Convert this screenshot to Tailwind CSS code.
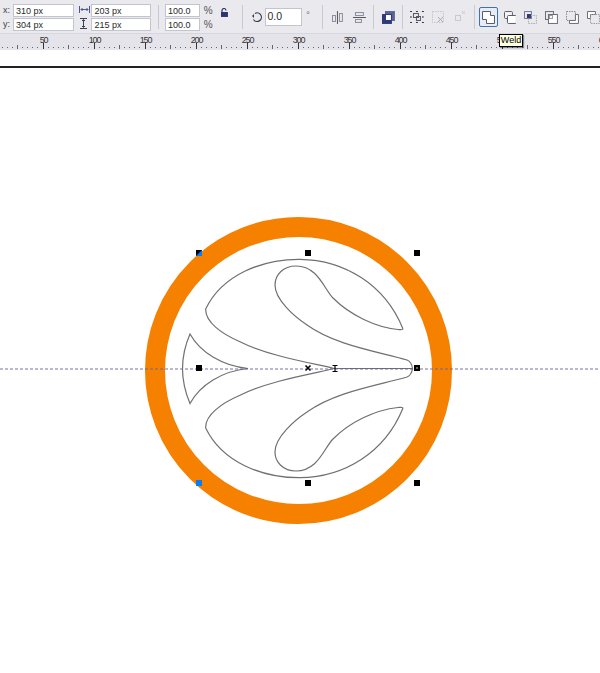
<!DOCTYPE html>
<html lang="en">
<head>
    <meta charset="UTF-8">
    <title>Weld</title>
    <script src="https://cdn.jsdelivr.net/npm/@tailwindcss/browser@4"></script>
</head>
<body class="bg-white w-[600px] h-[673px] overflow-hidden relative font-['Liberation_Sans',sans-serif]">

    <!-- property bar -->
    <div class="h-[33px] bg-[#e9e9ee] flex items-start text-[9px] leading-[13px] text-[#2a2a2a]">
        <div class="w-[13px] pl-[3px] pt-[4px] text-[#444]">
            <div class="h-[14px]">x:</div>
            <div class="h-[14px]">y:</div>
        </div>
        <div class="w-[61px] pt-[4px] flex flex-col gap-px">
            <div class="h-[13px] bg-white border border-[#c2c5d0] pl-[2px]">310 px</div>
            <div class="h-[13px] bg-white border border-[#c2c5d0] pl-[2px]">304 px</div>
        </div>
        <div class="w-[18px] pt-[6px] pl-[5px] flex flex-col gap-[5px]">
            <svg width="11" height="7" viewBox="0 0 11 7" fill="none" stroke="#4a5690"><path d="M.5 0v7M10.500 0v7M2 3.500h7M3.500 2 2 3.500l1.500 1.500M7.500 2 9 3.500 7.500 5"/></svg>
            <svg width="9" height="11" viewBox="0 0 9 11" fill="none" stroke="#3a3f5a"><path d="M1 .5h7M1 10.500h7M4.500 2v7M3 3l1.500-1.500L6 3M3 8l1.500 1.500L6 8"/></svg>
        </div>
        <div class="w-[60px] pt-[4px] flex flex-col gap-px">
            <div class="h-[13px] bg-white border border-[#c2c5d0] pl-[2px]">203 px</div>
            <div class="h-[13px] bg-white border border-[#c2c5d0] pl-[2px]">215 px</div>
        </div>
        <div class="w-px h-[24px] mt-[5px] ml-[7px] bg-[#c9c9d2]"></div>
        <div class="w-[35px] ml-[6px] pt-[4px] flex flex-col gap-px">
            <div class="h-[13px] bg-white border border-[#c2c5d0] pl-[2px]">100.0</div>
            <div class="h-[13px] bg-white border border-[#c2c5d0] pl-[2px]">100.0</div>
        </div>
        <div class="w-[16px] pl-[4px] pt-[4px] text-[#555] text-[10px]">
            <div class="h-[14px]">%</div>
            <div class="h-[14px]">%</div>
        </div>
        <svg class="mt-[8px] ml-[4px]" width="9" height="9" viewBox="0 0 9 9"><path d="M2 4V2.500a2 2 0 0 1 4 0" fill="none" stroke="#2b3570" stroke-width="1.200"/><rect x="1" y="4" width="7" height="5" fill="#2b3570"/></svg>
        <div class="w-px h-[24px] mt-[5px] ml-[13px] bg-[#c9c9d2]"></div>
        <svg class="mt-[11px] ml-[8px]" width="12" height="12" viewBox="0 0 12 12" fill="none" stroke="#3a3d4a" stroke-width="1.200"><path d="M4 2.500a4.300 4.300 0 1 1-1.500 6"/><path d="M3 3 1 5l2 2" fill="#3a3d4a" stroke="none"/></svg>
        <div class="w-[38px] h-[18px] mt-[8px] ml-[2px] bg-white border border-[#c2c5d0] pl-[2px] text-[10.500px] leading-[15px]">0.0</div>
        <div class="w-[20px] pl-[4px] pt-[9px] text-[#666]">°</div>
        <div class="w-px h-[24px] mt-[5px] bg-[#c9c9d2]"></div>
        <svg class="mt-[11px] ml-[8px]" width="13" height="13" viewBox="0 0 13 13" fill="none" stroke="#8a8e9c"><path d="M6.500 0v13" stroke="#555"/><rect x="1.500" y="4.500" width="3" height="6"/><rect x="8.500" y="2.500" width="3" height="8"/></svg>
        <svg class="mt-[11px] ml-[9px]" width="13" height="13" viewBox="0 0 13 13" fill="none" stroke="#8a8e9c"><path d="M0 6.500h13" stroke="#555"/><rect x="2.500" y="1.500" width="8" height="3"/><rect x="2.500" y="8.500" width="6" height="3"/></svg>
        <div class="w-px h-[24px] mt-[5px] ml-[7px] bg-[#c9c9d2]"></div>
        <svg class="mt-[11px] ml-[8px]" width="13" height="13" viewBox="0 0 13 13"><rect x="3" y="0" width="10" height="10" fill="#5a648f"/><rect x="0" y="3" width="10" height="10" fill="#2f3a7c"/><rect x="4" y="4" width="5" height="5" fill="#fff"/></svg>
        <div class="w-px h-[24px] mt-[5px] ml-[7px] bg-[#c9c9d2]"></div>
        <svg class="mt-[10px] ml-[7px]" width="14" height="14" viewBox="0 0 14 14" fill="none" stroke="#555864"><rect x="3.500" y="3.500" width="5" height="4"/><rect x="6.500" y="6.500" width="4" height="4"/><path d="M0 1.500h2M6 1.500h2M12 1.500h2M0 12.500h2M6 12.500h2M12 12.500h2M1 6v2M13 6v2" stroke="#333"/></svg>
        <svg class="mt-[10px] ml-[8px]" width="13" height="14" viewBox="0 0 13 14" fill="none" stroke="#c4c5cb" stroke-dasharray="1.500 1"><rect x=".5" y="1.500" width="11" height="11"/><path d="M6 7l5 5M11 7l-5 5" stroke="#a8a9b0" stroke-dasharray="none"/></svg>
        <svg class="mt-[10px] ml-[9px]" width="12" height="13" viewBox="0 0 12 13" fill="none" stroke="#c9cad0"><rect x="1.500" y="5.500" width="5" height="5"/><path d="M8 1l3 3M11 1 8 4"/></svg>
        <div class="w-px h-[24px] mt-[5px] ml-[8px] bg-[#c9c9d2]"></div>
        <div class="w-[19px] h-[20px] mt-[7px] ml-[4px] bg-[#e6edf6] border border-[#3f75a6] rounded-[2px] flex items-center justify-center">
            <svg width="15" height="15" viewBox="0 0 15 15"><path d="M1.500 1.500h8v4h4v8h-8v-4h-4z" fill="#fff" stroke="#5a5c68"/></svg>
        </div>
        <svg class="mt-[10px] ml-[5px]" width="14" height="14" viewBox="0 0 14 14" stroke="#5a5c68"><rect x="1.500" y="1.500" width="8" height="7" rx="1" fill="#f4f4f7"/><rect x="4.500" y="5.500" width="9" height="8" rx="1" fill="#fff"/></svg>
        <svg class="mt-[10px] ml-[7px]" width="14" height="14" viewBox="0 0 14 14" fill="none"><rect x="1.500" y="1.500" width="7" height="7" stroke="#7a7c88"/><rect x="5.500" y="5.500" width="8" height="8" stroke="#aaa" stroke-dasharray="1.500 1"/><rect x="4" y="4" width="4" height="4" fill="#2f3a7c"/></svg>
        <svg class="mt-[10px] ml-[7px]" width="14" height="14" viewBox="0 0 14 14" fill="none" stroke="#6a6c78"><rect x="1.500" y="1.500" width="8" height="8"/><rect x="4.500" y="4.500" width="9" height="9" fill="#fff"/><rect x="5.500" y="5.500" width="3" height="3" stroke="#999"/></svg>
        <svg class="mt-[10px] ml-[7px]" width="14" height="14" viewBox="0 0 14 14" fill="none"><rect x="1.500" y="1.500" width="9" height="9" stroke="#888" stroke-dasharray="1.500 1"/><path d="M10.500 4.500h3v9h-9v-3h6z" fill="#fff" stroke="#6a6c78"/></svg>
        <svg class="mt-[10px] ml-[7px]" width="14" height="14" viewBox="0 0 14 14" fill="none"><path d="M1.500 1.500h8v3h-5v4h-3z" fill="#fff" stroke="#6a6c78"/><rect x="4.500" y="4.500" width="9" height="9" stroke="#999" stroke-dasharray="1.500 1"/></svg>
    </div>

    <!-- ruler -->
    <div class="h-[17px] bg-[#e4e4ea] border-t border-[#d6d6de] relative overflow-hidden">
        <div class="flex pl-[18px] text-[9px] leading-[9px] tracking-[-1.200px] text-[#333] pt-[2px]">
            <div class="w-[51px] shrink-0 text-center">50</div>
            <div class="w-[51px] shrink-0 text-center">100</div>
            <div class="w-[51px] shrink-0 text-center">150</div>
            <div class="w-[51px] shrink-0 text-center">200</div>
            <div class="w-[51px] shrink-0 text-center">250</div>
            <div class="w-[51px] shrink-0 text-center">300</div>
            <div class="w-[51px] shrink-0 text-center">350</div>
            <div class="w-[51px] shrink-0 text-center">400</div>
            <div class="w-[51px] shrink-0 text-center">450</div>
            <div class="w-[51px] shrink-0 text-center">500</div>
            <div class="w-[51px] shrink-0 text-center">550</div>
            <div class="w-[51px] shrink-0 text-center">600</div>
        </div>
        <svg class="absolute inset-0" width="600" height="16">
            <defs>
                <pattern id="ticks" x="43" y="0" width="51" height="16" patternUnits="userSpaceOnUse">
                    <rect x="0" y="9" width="1" height="6" fill="#333"/>
                    <rect x="25" y="11" width="1" height="4" fill="#666"/>
                    <rect x="5" y="13" width="1" height="1" fill="#666"/>
                    <rect x="10" y="13" width="1" height="1" fill="#666"/>
                    <rect x="15" y="13" width="1" height="1" fill="#666"/>
                    <rect x="20" y="13" width="1" height="1" fill="#666"/>
                    <rect x="30" y="13" width="1" height="1" fill="#666"/>
                    <rect x="35" y="13" width="1" height="1" fill="#666"/>
                    <rect x="40" y="13" width="1" height="1" fill="#666"/>
                    <rect x="45" y="13" width="1" height="1" fill="#666"/>
                </pattern>
            </defs>
            <rect width="600" height="16" fill="url(#ticks)"/>
        </svg>
    </div>

    <!-- drawing page -->
    <div class="relative h-[623px]">
        <div class="h-[2px] bg-[#222] absolute left-0 right-0 top-[16px]"></div>
        <svg class="absolute inset-0" width="600" height="623" viewBox="0 50 600 623" fill="none">
            <circle cx="298.500" cy="370.500" r="143.500" stroke="#f68000" stroke-width="20"/>

            <g stroke="#707070" stroke-width="1.200">
                <path d="M205.700 309C222 275 262 259 300 259.300C345 260 385 285 402.700 328.300C403.500 330 400 329.500 398 329.500C375 327 350 315 333 298C324 289 318 266 296 266C283 266 275 275 275 285C275 300 295 317 307 325C335 345 375 351 407 360C411 361.500 412 365 412.500 368.500L334 368.500C320 364.500 270 357 240 341.700C222 334 205 322 205.700 309Z"/>
                <path transform="matrix(1 0 0 -1 0 737)" d="M205.700 309C222 275 262 259 300 259.300C345 260 385 285 402.700 328.300C403.500 330 400 329.500 398 329.500C375 327 350 315 333 298C324 289 318 266 296 266C283 266 275 275 275 285C275 300 295 317 307 325C335 345 375 351 407 360C411 361.500 412 365 412.500 368.500L334 368.500C320 364.500 270 357 240 341.700C222 334 205 322 205.700 309Z"/>
                <path d="M190 334C200 352 222 366 248 368.500C222 371 200 385 190 403.500C180 380 180 357 190 334Z"/>
            </g>

            <path d="M0 369H600" stroke="#6a62a0" stroke-opacity=".9" stroke-dasharray="3 2"/>

            <g fill="#000">
                <rect x="196" y="250" width="6" height="6"/>
                <rect x="305" y="250" width="6" height="6"/>
                <rect x="414" y="250" width="6" height="6"/>
                <rect x="196" y="365" width="6" height="6"/>
                <rect x="414" y="365" width="6" height="6"/>
                <rect x="305" y="480" width="6" height="6"/>
                <rect x="414" y="480" width="6" height="6"/>
            </g>
            <path d="M202 250v6h-6z" fill="#0a7cf5"/>
            <rect x="416" y="367" width="2" height="2" fill="#6b6a30"/>
            <rect x="196" y="480" width="6" height="6" fill="#0a7cf5"/>
            <path d="M305.500 365.500l5 5M310.500 365.500l-5 5" stroke="#000" stroke-width="1.500"/>
            <path d="M332.500 365.500h5M332.500 371.500h5M335 366v5" stroke="#000" stroke-width="1.200"/>
        </svg>
    </div>

    <!-- tooltip -->
    <div class="absolute left-[499px] top-[34px] w-[24px] h-[13px] bg-[#ffffe1] border border-black text-[9px] leading-[11px] text-center text-black shadow-[1px_1px_1px_rgba(0,0,0,0.4)]">Weld</div>
</body>
</html>
